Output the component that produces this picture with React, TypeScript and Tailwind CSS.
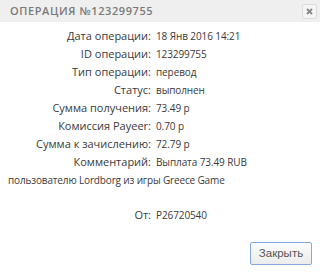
import React from "react";

const rows: [string, string][] = [
  ["Дата операции:", "18 Янв 2016 14:21"],
  ["ID операции:", "123299755"],
  ["Тип операции:", "перевод"],
  ["Статус:", "выполнен"],
  ["Сумма получения:", "73.49 р"],
  ["Комиссия Payeer:", "0.70 р"],
  ["Сумма к зачислению:", "72.79 р"],
  ["Комментарий:", "Выплата 73.49 RUB"],
];

export default function App() {
  return (
    <div className="w-[320px] h-[273px] bg-white flex flex-col text-[#3a3a3a]" style={{ fontFamily: '"Open Sans", sans-serif' }}>
      <div className="h-[22px] bg-[#efefef] flex items-center justify-between pl-[10px] pr-[3px]">
        <span className="text-[11px] tracking-[0.6px] text-[#7a7a7a] font-semibold">ОПЕРАЦИЯ №123299755</span>
        <div className="w-[15px] h-[15px] border border-[#dcdcdc] rounded-[2px] bg-[#f5f5f5] flex items-center justify-center">
          <svg width="7" height="7" viewBox="0 0 7 7">
            <path d="M1 1L6 6M6 1L1 6" stroke="#888" strokeWidth="1.8" />
          </svg>
        </div>
      </div>
      <div className="pt-[5px] leading-[18px]">
        {rows.map(([l, v]) => (
          <div key={l} className="flex items-baseline">
            <div className="w-[151px] text-right shrink-0 text-[11px]">{l}</div>
            <div className="pl-[5px] text-[10px] tracking-[-0.1px]">{v}</div>
          </div>
        ))}
        <div className="pl-[8px] text-[10px] tracking-[-0.15px]">пользователю Lordborg из игры Greece Game</div>
        <div className="h-[17px]" />
        <div className="flex items-baseline">
          <div className="w-[151px] text-right shrink-0 text-[11px]">От:</div>
          <div className="pl-[5px] text-[10px] tracking-[-0.1px]">P26720540</div>
        </div>
      </div>
      <div className="flex justify-end pr-[8px] mt-[18px]">
        <button className="w-[62px] h-[23px] border border-[#86a8e0] rounded-[2px] bg-gradient-to-b from-[#fcfcfc] to-[#ececec] text-[11.5px] text-[#555]" style={{ fontFamily: '"Liberation Sans", sans-serif' }}>
          Закрыть
        </button>
      </div>
    </div>
  );
}
